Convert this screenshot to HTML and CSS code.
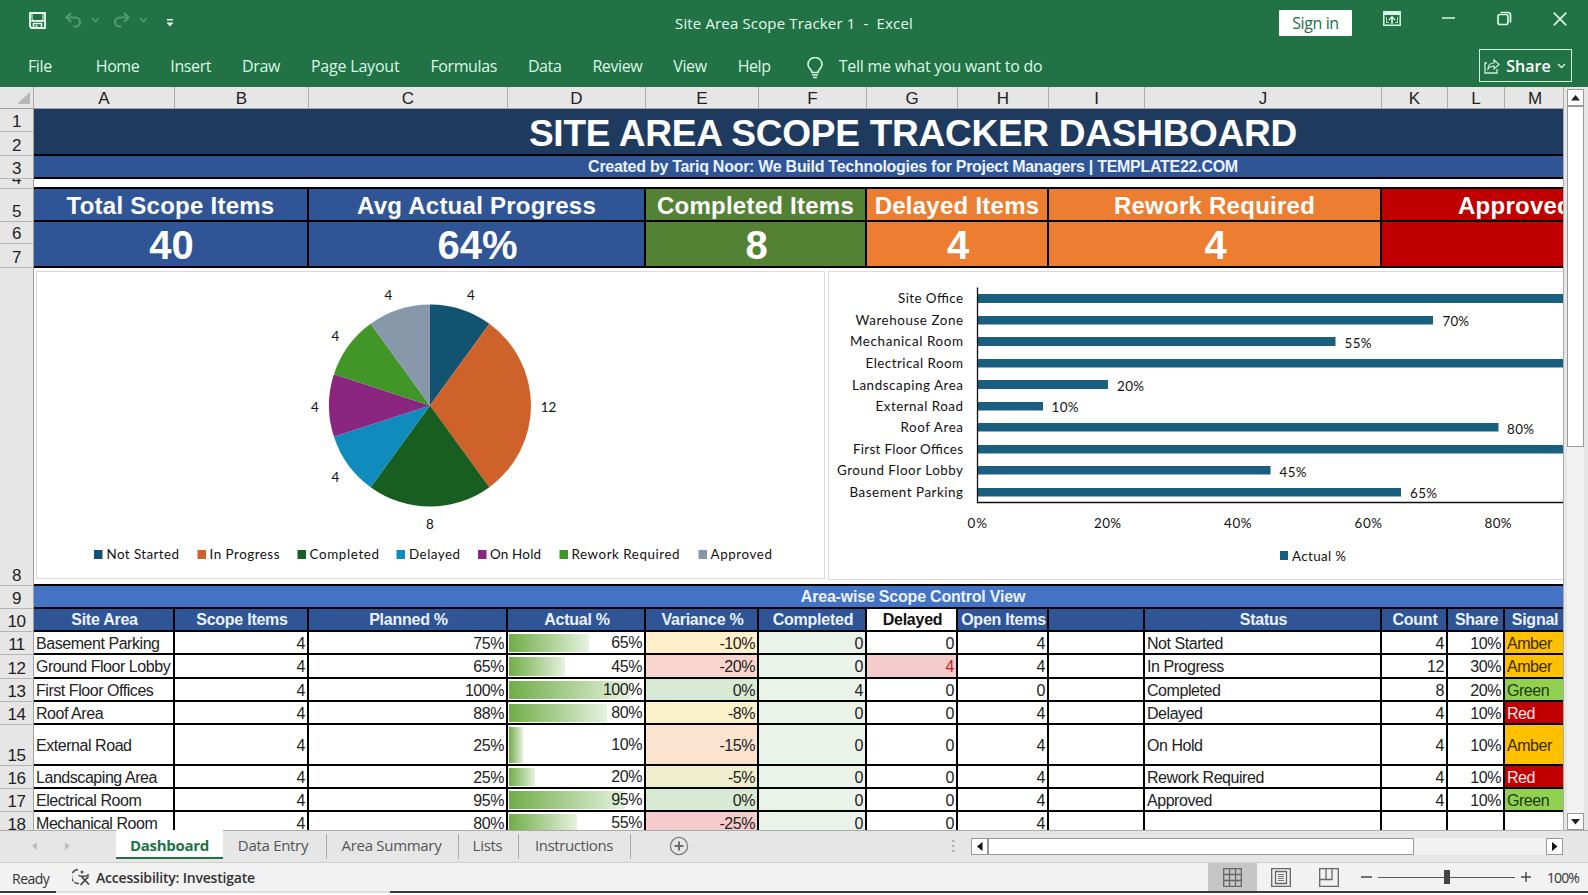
FILE: index.html
```html
<!DOCTYPE html>
<html lang="en">
<head>
  <meta charset="UTF-8">
  <meta name="viewport" content="width=device-width, initial-scale=1.0">
  <title>Site Area Scope Tracker 1 - Excel</title>
  <link rel="stylesheet" href="styles.css">
</head>
<body>

  <!-- Title bar -->
  <header class="titlebar">
    <div class="quick">
      <svg class="q-save" width="17" height="17" viewBox="0 0 17 17"><path d="M1 1h15v15H2.500L1 14.500z" fill="none" stroke="#e9fff2" stroke-width="1.800"/><path d="M3 1v6L4 8.500h9l1-1.500V1" fill="none" stroke="#e9fff2" stroke-width="1"/><path d="M1 8.200h15v1.600H1z" fill="#e9fff2"/><path d="M4.500 16v-4.500h8V16M7.500 13v3" fill="none" stroke="#e9fff2" stroke-width="1.600"/></svg>
      <svg class="q-undo" width="17" height="16" viewBox="0 0 17 16"><path d="M6 1L1.500 5.500 6 10M2 5.500h8.500a4.500 4.500 0 0 1 0 9H8.500" fill="none" stroke="#4f9a70" stroke-width="2.200"/></svg>
      <svg class="q-chev" width="9" height="6" viewBox="0 0 9 6"><path d="M1 1l3.500 3.500L8 1" fill="none" stroke="#4f9a70" stroke-width="1.600"/></svg>
      <svg class="q-redo" width="17" height="16" viewBox="0 0 17 16"><path d="M11 1l4.500 4.500L11 10M15 5.500H6.500a4.500 4.500 0 0 0 0 9H8.500" fill="none" stroke="#4f9a70" stroke-width="2.200"/></svg>
      <svg class="q-chev" width="9" height="6" viewBox="0 0 9 6"><path d="M1 1l3.500 3.500L8 1" fill="none" stroke="#4f9a70" stroke-width="1.600"/></svg>
      <svg class="q-more" width="8" height="8" viewBox="0 0 8 8"><path d="M1 0h6v1.500H1zM.5 3.500h7L4 7.500z" fill="#e9fff2"/></svg>
    </div>
    <div class="doc-name">Site Area Scope Tracker 1&nbsp; -&nbsp; Excel</div>
    <div class="win">
      <button class="signin">Sign in</button>
      <svg class="w-ribbon" width="18" height="15" viewBox="0 0 18 15"><path d="M.8.8h16.400v13.400H.8z" fill="none" stroke="#d5f7e3" stroke-width="1.500"/><path d="M1 1h16v3H1z" fill="#d5f7e3"/><path d="M3 11.500h3M12 11.500h3M3.500 11V6M14.500 11V6" stroke="#a9d8bd" stroke-width="1"/><path d="M9 13V6.500M6 9l3-3 3 3" fill="none" stroke="#d5f7e3" stroke-width="1.600"/></svg>
      <svg class="w-min" width="13" height="2" viewBox="0 0 13 2"><path d="M0 1h13" stroke="#d5f7e3" stroke-width="1.500"/></svg>
      <svg class="w-max" width="15" height="15" viewBox="0 0 15 15"><rect x="1" y="3.500" width="10" height="10" rx="2" fill="none" stroke="#d5f7e3" stroke-width="1.700"/><path d="M3.500 1.500H11a2.500 2.500 0 0 1 2.500 2.500v7.500" fill="none" stroke="#d5f7e3" stroke-width="1.700"/></svg>
      <svg class="w-close" width="14" height="14" viewBox="0 0 14 14"><path d="M.7.7l12.600 12.600M13.300.7L.7 13.300" stroke="#d5f7e3" stroke-width="1.700"/></svg>
    </div>
  </header>

  <!-- Ribbon tabs -->
  <nav class="ribbon">
    <span class="tab-file">File</span>
    <span>Home</span>
    <span>Insert</span>
    <span>Draw</span>
    <span class="t-page">Page Layout</span>
    <span>Formulas</span>
    <span>Data</span>
    <span>Review</span>
    <span>View</span>
    <span>Help</span>
    <svg class="bulb" width="16" height="22" viewBox="0 0 16 22"><path d="M5 15.500C5 12.500 1 11.500 1 7.500a7 7 0 0 1 14 0c0 4-4 5-4 8z" fill="none" stroke="#d5f7e3" stroke-width="1.600"/><path d="M5 18h6M6 20.500h4" stroke="#d5f7e3" stroke-width="1.600"/></svg>
    <span class="tellme">Tell me what you want to do</span>
    <button class="share">
      <svg width="16" height="16" viewBox="0 0 16 16"><path d="M3 5H1v10h12v-4" fill="none" stroke="#c9f0da" stroke-width="1.300"/><path d="M4 11c0-4 2.500-6 6-6V1.800L15 6.500 10 11V8C7.500 8 5.500 8.500 4 11z" fill="none" stroke="#c9f0da" stroke-width="1.200"/></svg>
      <span>Share</span>
      <svg width="9" height="6" viewBox="0 0 9 6"><path d="M1 1l3.500 3.500L8 1" fill="none" stroke="#d5f7e3" stroke-width="1.400"/></svg>
    </button>
  </nav>

  <main class="work">
    <div class="sheet">
      <!-- Column letters -->
      <div class="row col-heads">
        <div class="corner"><svg width="13" height="12" viewBox="0 0 13 12"><path d="M13 0v12H0z" fill="#b8b8b8"/></svg></div>
        <div>A</div><div>B</div><div>C</div><div>D</div><div>E</div><div>F</div><div>G</div><div>H</div><div>I</div><div>J</div><div>K</div><div>L</div><div>M</div><div></div>
      </div>

      <div class="row r-title">
        <div class="heads"><div class="rh h23">1</div><div class="rh h24">2</div></div>
        <div class="cell full title">SITE AREA SCOPE TRACKER DASHBOARD</div>
      </div>
      <div class="row h23">
        <div class="rh">3</div>
        <div class="cell full sub">Created by Tariq Noor: We Build Technologies for Project Managers | TEMPLATE22.COM</div>
      </div>
      <div class="row r-gap">
        <div class="rh">4</div>
        <div class="cell full"></div>
      </div>

      <!-- KPI cards -->
      <div class="row r-kpi">
        <div class="rh">5</div>
        <div class="cell kpi blue s2">Total Scope Items</div>
        <div class="cell kpi blue s2">Avg Actual Progress</div>
        <div class="cell kpi green s2">Completed Items</div>
        <div class="cell kpi orange s2">Delayed Items</div>
        <div class="cell kpi orange s2">Rework Required</div>
        <div class="cell kpi red s4">Approved</div>
      </div>
      <div class="row r-val">
        <div class="heads"><div class="rh h22">6</div><div class="rh h24">7</div></div>
        <div class="cell val blue s2">40</div>
        <div class="cell val blue s2">64%</div>
        <div class="cell val green s2">8</div>
        <div class="cell val orange s2">4</div>
        <div class="cell val orange s2">4</div>
        <div class="cell val red s4"></div>
      </div>

      <!-- Charts -->
      <div class="row r-charts">
        <div class="rh">8</div>
        <div class="cell full charts">
          <svg class="chart" width="790" height="308" viewBox="36 271 790 308">
            <rect x="36.500" y="271.500" width="788" height="307" fill="#fff" stroke="#d9d9d9"/>
            <path d="M430 405.500V304.500A101 101 0 0 1 489.370 323.790Z" fill="#115370"/>
            <path d="M430 405.500L489.370 323.790A101 101 0 0 1 489.370 487.210Z" fill="#cf622b"/>
            <path d="M430 405.500L489.370 487.210A101 101 0 0 1 370.630 487.210Z" fill="#185e20"/>
            <path d="M430 405.500L370.630 487.210A101 101 0 0 1 333.940 436.710Z" fill="#0f8bbd"/>
            <path d="M430 405.500L333.940 436.710A101 101 0 0 1 333.940 374.290Z" fill="#8b2680"/>
            <path d="M430 405.500L333.940 374.290A101 101 0 0 1 370.630 323.790Z" fill="#429527"/>
            <path d="M430 405.500L370.630 323.790A101 101 0 0 1 430 304.500Z" fill="#8798ab"/>
            <g class="mid">
              <text x="471" y="300">4</text>
              <text x="548.500" y="412">12</text>
              <text x="430" y="528.500">8</text>
              <text x="335.500" y="481.500">4</text>
              <text x="315" y="412">4</text>
              <text x="335.500" y="341">4</text>
              <text x="388.500" y="300">4</text>
            </g>
            <g>
              <rect x="94" y="550" width="8.500" height="9" fill="#115370"/><text x="106.500" y="559" textLength="72.500">Not Started</text>
              <rect x="197.500" y="550" width="8.500" height="9" fill="#cf622b"/><text x="209.500" y="559" textLength="70">In Progress</text>
              <rect x="297.500" y="550" width="8.500" height="9" fill="#185e20"/><text x="309.500" y="559" textLength="69.500">Completed</text>
              <rect x="396.500" y="550" width="8.500" height="9" fill="#0f8bbd"/><text x="409" y="559" textLength="51">Delayed</text>
              <rect x="478" y="550" width="8.500" height="9" fill="#8b2680"/><text x="490" y="559" textLength="51">On Hold</text>
              <rect x="559.500" y="550" width="8.500" height="9" fill="#429527"/><text x="571.500" y="559" textLength="108">Rework Required</text>
              <rect x="698.500" y="550" width="8.500" height="9" fill="#8798ab"/><text x="710.500" y="559" textLength="61.500">Approved</text>
            </g>
          </svg>
          <svg class="chart" width="800" height="309" viewBox="828 271 800 309">
            <rect x="828.500" y="271.500" width="900" height="308" fill="#fff" stroke="#d9d9d9"/>
            <g fill="#195f80">
              <rect x="977" y="294" width="651" height="9"/>
              <rect x="977" y="316" width="456" height="8.500"/>
              <rect x="977" y="337" width="358.500" height="9"/>
              <rect x="977" y="359" width="618" height="8.500"/>
              <rect x="977" y="380" width="131" height="9"/>
              <rect x="977" y="402" width="66" height="8.500"/>
              <rect x="977" y="423" width="521.500" height="8.500"/>
              <rect x="977" y="445" width="651" height="8.500"/>
              <rect x="977" y="466" width="293.500" height="8.500"/>
              <rect x="977" y="488" width="424" height="8.500"/>
            </g>
            <path d="M977.500 287.500V502.500H1628" fill="none" stroke="#111" stroke-width="1.300"/>
            <g>
              <text x="898" y="303" textLength="65">Site Office</text>
              <text x="855.500" y="325" textLength="107.500">Warehouse Zone</text>
              <text x="850" y="346" textLength="113">Mechanical Room</text>
              <text x="865.500" y="367.500" textLength="97.500">Electrical Room</text>
              <text x="852" y="389.500" textLength="111">Landscaping Area</text>
              <text x="875.500" y="410.500" textLength="87.500">External Road</text>
              <text x="900.500" y="432" textLength="62.500">Roof Area</text>
              <text x="853" y="453.500" textLength="110">First Floor Offices</text>
              <text x="837" y="475" textLength="126">Ground Floor Lobby</text>
              <text x="849.500" y="496.500" textLength="113.500">Basement Parking</text>
            </g>
            <g>
              <text x="1442.500" y="325.500" textLength="26.500">70%</text>
              <text x="1344.500" y="347.500" textLength="27">55%</text>
              <text x="1117" y="390.500" textLength="27">20%</text>
              <text x="1051.500" y="411.500" textLength="27">10%</text>
              <text x="1507" y="433.500" textLength="27">80%</text>
              <text x="1279.500" y="476.500" textLength="27">45%</text>
              <text x="1410" y="497.500" textLength="27">65%</text>
            </g>
            <g>
              <text x="967.500" y="528" textLength="19.500">0%</text>
              <text x="1094" y="528" textLength="27">20%</text>
              <text x="1224" y="528" textLength="27.500">40%</text>
              <text x="1354.500" y="528" textLength="27.500">60%</text>
              <text x="1484.500" y="528" textLength="27">80%</text>
            </g>
            <rect x="1280" y="551" width="8" height="9" fill="#195f80"/><text x="1292" y="560.500" textLength="54">Actual %</text>
          </svg>
        </div>
      </div>

      <!-- Control table -->
      <div class="row h23">
        <div class="rh">9</div>
        <div class="cell full area">Area-wise Scope Control View</div>
      </div>
      <div class="row h23 thead">
        <div class="rh">10</div>
        <div class="cell">Site Area</div><div class="cell">Scope Items</div><div class="cell">Planned %</div><div class="cell">Actual %</div><div class="cell">Variance %</div><div class="cell">Completed</div><div class="cell plain">Delayed</div><div class="cell">Open Items</div><div class="cell"></div><div class="cell">Status</div><div class="cell">Count</div><div class="cell">Share</div><div class="cell">Signal</div><div class="cell"></div>
      </div>
      <div class="row h23 data">
        <div class="rh">11</div>
        <div class="cell txt">Basement Parking</div><div class="cell">4</div><div class="cell">75%</div><div class="cell bar"><i style="width:80px"></i><b>65%</b></div><div class="cell v10">-10%</div><div class="cell done">0</div><div class="cell">0</div><div class="cell">4</div><div class="cell"></div><div class="cell txt">Not Started</div><div class="cell">4</div><div class="cell">10%</div><div class="cell txt amber">Amber</div><div class="cell"></div>
      </div>
      <div class="row h24 data">
        <div class="rh">12</div>
        <div class="cell txt">Ground Floor Lobby</div><div class="cell">4</div><div class="cell">65%</div><div class="cell bar"><i style="width:56px"></i><b>45%</b></div><div class="cell v20">-20%</div><div class="cell done">0</div><div class="cell late">4</div><div class="cell">4</div><div class="cell"></div><div class="cell txt">In Progress</div><div class="cell">12</div><div class="cell">30%</div><div class="cell txt amber">Amber</div><div class="cell"></div>
      </div>
      <div class="row h23 data">
        <div class="rh">13</div>
        <div class="cell txt">First Floor Offices</div><div class="cell">4</div><div class="cell">100%</div><div class="cell bar"><i style="width:122px"></i><b>100%</b></div><div class="cell v0">0%</div><div class="cell done">4</div><div class="cell">0</div><div class="cell">0</div><div class="cell"></div><div class="cell txt">Completed</div><div class="cell">8</div><div class="cell">20%</div><div class="cell txt ok">Green</div><div class="cell"></div>
      </div>
      <div class="row h23 data">
        <div class="rh">14</div>
        <div class="cell txt">Roof Area</div><div class="cell">4</div><div class="cell">88%</div><div class="cell bar"><i style="width:98px"></i><b>80%</b></div><div class="cell v8">-8%</div><div class="cell done">0</div><div class="cell">0</div><div class="cell">4</div><div class="cell"></div><div class="cell txt">Delayed</div><div class="cell">4</div><div class="cell">10%</div><div class="cell txt stop">Red</div><div class="cell"></div>
      </div>
      <div class="row h41 data">
        <div class="rh">15</div>
        <div class="cell txt">External Road</div><div class="cell">4</div><div class="cell">25%</div><div class="cell bar"><i style="width:14px"></i><b>10%</b></div><div class="cell v15">-15%</div><div class="cell done">0</div><div class="cell">0</div><div class="cell">4</div><div class="cell"></div><div class="cell txt">On Hold</div><div class="cell">4</div><div class="cell">10%</div><div class="cell txt amber">Amber</div><div class="cell"></div>
      </div>
      <div class="row h23 data">
        <div class="rh">16</div>
        <div class="cell txt">Landscaping Area</div><div class="cell">4</div><div class="cell">25%</div><div class="cell bar"><i style="width:26px"></i><b>20%</b></div><div class="cell v5">-5%</div><div class="cell done">0</div><div class="cell">0</div><div class="cell">4</div><div class="cell"></div><div class="cell txt">Rework Required</div><div class="cell">4</div><div class="cell">10%</div><div class="cell txt stop">Red</div><div class="cell"></div>
      </div>
      <div class="row h23 data">
        <div class="rh">17</div>
        <div class="cell txt">Electrical Room</div><div class="cell">4</div><div class="cell">95%</div><div class="cell bar"><i style="width:116px"></i><b>95%</b></div><div class="cell v0">0%</div><div class="cell done">0</div><div class="cell">0</div><div class="cell">4</div><div class="cell"></div><div class="cell txt">Approved</div><div class="cell">4</div><div class="cell">10%</div><div class="cell txt ok">Green</div><div class="cell"></div>
      </div>
      <div class="row h23 data">
        <div class="rh">18</div>
        <div class="cell txt">Mechanical Room</div><div class="cell">4</div><div class="cell">80%</div><div class="cell bar"><i style="width:68px"></i><b>55%</b></div><div class="cell v25">-25%</div><div class="cell done">0</div><div class="cell">0</div><div class="cell">4</div><div class="cell"></div><div class="cell txt"></div><div class="cell"></div><div class="cell"></div><div class="cell txt"></div><div class="cell"></div>
      </div>
    </div>

    <div class="vscroll">
      <div class="sbtn"><svg width="9" height="6" viewBox="0 0 9 6"><path d="M4.500 0L9 5.500H0z" fill="#222"/></svg></div>
      <div class="vthumb"></div>
      <div class="vtrack"></div>
      <div class="sbtn"><svg width="9" height="6" viewBox="0 0 9 6"><path d="M4.500 5.500L9 0H0z" fill="#222"/></svg></div>
    </div>
  </main>

  <!-- Sheet tabs -->
  <div class="tabs">
    <div class="tab-nav">
      <svg width="5" height="8" viewBox="0 0 5 8"><path d="M5 0v8L0 4z" fill="#bdbdbd"/></svg>
      <svg width="5" height="8" viewBox="0 0 5 8"><path d="M0 0v8l5-4z" fill="#bdbdbd"/></svg>
    </div>
    <div class="tab active">Dashboard</div>
    <div class="tab w-entry">Data Entry</div>
    <div class="tab w-summary">Area Summary</div>
    <div class="tab w-lists">Lists</div>
    <div class="tab w-instr">Instructions</div>
    <svg class="plus" width="20" height="20" viewBox="0 0 20 20"><circle cx="10" cy="10" r="8.600" fill="none" stroke="#7b7b7b" stroke-width="1.300"/><path d="M10 5.500v9M5.500 10h9" stroke="#6b6b6b" stroke-width="2"/></svg>
    <svg class="grip" width="3" height="14" viewBox="0 0 3 14"><path d="M0 1h2.500v2H0zM0 6h2.500v2H0zM0 11h2.500v2H0z" fill="#b0b0b0"/></svg>
    <div class="hscroll">
      <div class="sbtn"><svg width="6" height="9" viewBox="0 0 6 9"><path d="M0 4.500L5.500 0v9z" fill="#111"/></svg></div>
      <div class="hthumb"></div>
      <div class="htrack"></div>
      <div class="sbtn"><svg width="6" height="9" viewBox="0 0 6 9"><path d="M5.500 4.500L0 0v9z" fill="#111"/></svg></div>
    </div>
  </div>

  <!-- Status bar -->
  <footer class="status">
    <span class="ready">Ready</span>
    <svg class="access" width="19" height="18" viewBox="0 0 19 18"><path d="M6 1.500A7 7 0 0 0 7 15.500" fill="none" stroke="#555" stroke-width="1.500" stroke-dasharray="7 1.500"/><path d="M10 2.500v3M8.500 4h3" stroke="#555" stroke-width="1.600"/><path d="M6.500 7.500l3 .8h4l3.500-1.800" fill="none" stroke="#555" stroke-width="1.500"/><path d="M9.500 8.500l7.500 8M16.500 8.500L8.500 17" stroke="#444" stroke-width="1.800"/></svg>
    <span class="acc-text">Accessibility: Investigate</span>
    <div class="views">
      <div class="view on"><svg width="19" height="19" viewBox="0 0 19 19"><path d="M.7.7h17.600v17.600H.7zM6.500.7v17.600M12.500.7v17.600M.7 6.500h17.600M.7 12.500h17.600" fill="none" stroke="#666" stroke-width="1.300"/></svg></div>
      <div class="view"><svg width="20" height="19" viewBox="0 0 20 19"><path d="M.7.7h18.600v17.600H.7zM4.500 3.500h11v12h-11z" fill="none" stroke="#666" stroke-width="1.300"/><path d="M7 6.500h6M7 8.500h6M7 10.500h6M7 12.500h6" stroke="#777" stroke-width="1"/></svg></div>
      <div class="view"><svg width="20" height="19" viewBox="0 0 20 19"><path d="M.7.7h18.600v17.600H.7zM.7 11.500h12.300V.7M7 .7v10.800" fill="none" stroke="#666" stroke-width="1.300"/></svg></div>
    </div>
    <div class="zoom">
      <svg width="170" height="20" viewBox="0 0 170 20"><path d="M0 10h11" stroke="#444" stroke-width="1.500"/><path d="M17 10.500h137" stroke="#555" stroke-width="1.200"/><rect x="83" y="3" width="6" height="14" fill="#444"/><path d="M160 10h10M165 5v10" stroke="#444" stroke-width="1.400"/></svg>
      <span>100%</span>
    </div>
  </footer>
  <div class="edge"><i></i><i></i><i></i></div>

</body>
</html>
```
FILE: styles.css
```css
* {
  box-sizing: border-box;
}

body {
  margin: 0;
  width: 1588px;
  height: 895px;
  overflow: hidden;
  background: #fff;
  font-family: "Open Sans", sans-serif;
  color: #222;
}

svg {
  display: block;
  flex: none;
}

/* Title bar */
.titlebar {
  height: 46px;
  background: #217346;
  display: grid;
  grid-template-columns: 675px 1fr auto;
}

.quick {
  display: flex;
  align-items: flex-start;
  padding: 12px 0 0 29px;
}

.q-undo {
  margin: 0 9px 0 19px;
}

.q-redo {
  margin: 0 9px 0 13px;
}

.q-chev {
  margin-top: 5px;
}

.q-more {
  margin: 7px 0 0 18px;
}

.doc-name {
  color: #e4faed;
  font-size: 15px;
  line-height: 46px;
  letter-spacing: 0.15px;
  white-space: nowrap;
}

.win {
  display: flex;
  align-items: flex-start;
  padding-right: 21px;
}

.signin {
  width: 73px;
  height: 26px;
  margin-top: 10px;
  padding: 0;
  border: none;
  border-radius: 1px;
  background: #fff;
  color: #217346;
  font-family: inherit;
  font-size: 16px;
  line-height: 26px;
  letter-spacing: -0.4px;
}

.w-ribbon {
  margin: 11px 0 0 31px;
}

.w-min {
  margin: 17px 0 0 41px;
}

.w-max {
  margin: 11px 0 0 42px;
}

.w-close {
  margin: 12px 0 0 41px;
}

/* Ribbon */
.ribbon {
  height: 41px;
  background: #217346;
  color: #dcf7e7;
  display: flex;
  align-items: center;
  font-size: 16px;
  letter-spacing: -0.4px;
  padding: 0 16px 2px 28px;
  gap: 31px;
  white-space: nowrap;
}

.tab-file {
  margin-right: 13px;
}

.t-page {
  letter-spacing: -0.2px;
}

.bulb {
  margin: 4px 0 0 5px;
}

.tellme {
  margin-left: -15px;
  letter-spacing: -0.25px;
}

.share {
  margin-left: auto;
  width: 93px;
  height: 33px;
  padding: 0 5px 0 4px;
  border: 1px solid #c9f0da;
  background: none;
  color: #fff;
  font-family: inherit;
  font-size: 16px;
  font-weight: 600;
  display: flex;
  align-items: center;
  justify-content: space-between;
}

/* Worksheet */
.work {
  height: 743px;
  display: flex;
  background: #e6e6e6;
}

.sheet {
  width: 1564px;
  overflow: hidden;
  border-right: 1px solid #ababab;
  font-family: "Liberation Sans", Arial, sans-serif;
  font-size: 16px;
}

.row {
  display: grid;
  grid-template-columns: 34px 141px 134px 199px 138px 113px 108px 91px 91px 96px 237px 66px 57px 60px 227px;
  width: 1792px;
}

.h22 { height: 22px; }
.h23 { height: 23px; }
.h24 { height: 24px; }
.h41 { height: 41px; }

.col-heads {
  height: 22px;
  background: #e6e6e6;
  border-bottom: 1px solid #9f9f9f;
  font-size: 17px;
  line-height: 23px;
  text-align: center;
}

.col-heads div {
  border-right: 1px solid #ababab;
}

.col-heads div:nth-last-child(2) {
  border-right: none;
}

.corner {
  display: flex;
  justify-content: flex-end;
  padding: 5px 3px 0 0;
}

.rh {
  background: #e6e6e6;
  border-right: 1px solid #9f9f9f;
  border-bottom: 1px solid #b4b4b4;
  display: flex;
  align-items: flex-end;
  justify-content: center;
  font-size: 17px;
  line-height: 19px;
  letter-spacing: -0.5px;
  overflow: hidden;
}

.cell {
  background: #fff;
  border-right: 2px solid #000;
  border-bottom: 2px solid #000;
  display: flex;
  align-items: center;
  justify-content: center;
  white-space: nowrap;
  overflow: hidden;
  min-width: 0;
}

.full { grid-column: 2 / -1; }
.s2 { grid-column: span 2; }
.s4 { grid-column: span 4; }

.r-title { height: 47px; }
.r-gap { height: 10px; }
.r-kpi { height: 33px; }
.r-val { height: 46px; }
.r-charts { height: 318px; }

.title {
  background: #1f3a5f;
  color: #fff;
  font-size: 37px;
  font-weight: bold;
  letter-spacing: -0.25px;
  padding: 4px 0 0 2px;
}

.sub {
  background: #2f5597;
  color: #eaf3ff;
  font-weight: bold;
  letter-spacing: -0.28px;
  padding: 1px 0 0 2px;
}

.kpi {
  color: #fff;
  font-size: 24px;
  font-weight: bold;
  letter-spacing: 0.25px;
  padding-top: 2px;
}

.val {
  color: #fff;
  font-size: 40px;
  font-weight: bold;
  padding: 3px 0 0 2px;
}

.blue { background: #2f5597; }
.green { background: #548235; }
.orange { background: #ed7d31; }
.red { background: #c00000; }

.kpi.red {
  justify-content: flex-start;
  padding-left: 76px;
}

.charts {
  align-items: flex-start;
  justify-content: flex-start;
  gap: 2px;
  padding: 3px 0 0 2px;
}

.chart text {
  font-family: Lato, sans-serif;
  font-size: 13.4px;
  fill: #111;
}

.chart .mid {
  text-anchor: middle;
}

.area {
  background: #4472c4;
  color: #eaf3ff;
  font-weight: bold;
  letter-spacing: -0.2px;
  padding: 1px 0 0 2px;
}

.thead .cell {
  background: #2f5597;
  color: #eaf3ff;
  font-weight: bold;
  letter-spacing: -0.25px;
  padding: 1px 0 0 2px;
}

.thead .plain {
  background: #fff;
  color: #111;
}

.data .cell {
  justify-content: flex-end;
  padding: 2px 2px 0 0;
  letter-spacing: -0.45px;
}

.data .txt {
  justify-content: flex-start;
  padding-left: 2px;
}

.data .bar {
  padding: 1px 2px 1px 0;
  justify-content: space-between;
  align-items: stretch;
}

/* the number is printed over the gradient bar */
.bar i {
  flex: none;
  margin: 1px 0 0 1px;
  background: linear-gradient(90deg, #70ad47, #e6f2df);
}

.bar b {
  width: 60px;
  margin-left: -60px;
  padding-top: 1px;
  font-weight: normal;
  display: flex;
  align-items: center;
  justify-content: flex-end;
}

.data .v0 { background: #d9ead3; }
.data .v5 { background: #efefcd; }
.data .v8 { background: #fbf2cc; }
.data .v10 { background: #fff0cb; }
.data .v15 { background: #fce3cf; }
.data .v20 { background: #f8d5cd; }
.data .v25 { background: #f4cccc; }
.data .done { background: #eaf3e9; }
.data .late { background: #f4cccc; color: #c81e1e; }
.data .amber { background: #ffc000; color: #3d2c00; }
.data .ok { background: #92d050; color: #1c3a0a; }
.data .stop { background: #c00000; color: #ffe9e9; }

/* Scrollbars */
.sbtn {
  width: 17px;
  height: 17px;
  flex: none;
  background: #fff;
  border: 1px solid #999;
  display: flex;
  align-items: center;
  justify-content: center;
}

.vscroll {
  width: 17px;
  margin: 2px 0 0 3px;
  display: flex;
  flex-direction: column;
}

.vthumb {
  height: 341px;
  background: #fff;
  border: 1px solid #999;
}

.vtrack {
  flex: 1;
  background: #f1f1f1;
}

/* Sheet tabs */
.tabs {
  height: 33px;
  background: #e6e6e6;
  border-bottom: 1px solid #cfcfcf;
  box-shadow: inset 0 1px #ababab;
  display: flex;
  align-items: flex-start;
  font-size: 15px;
  letter-spacing: -0.3px;
  color: #555;
}

.tab-nav {
  width: 116px;
  display: flex;
  gap: 28px;
  padding: 12px 0 0 32px;
}

.tab {
  height: 25px;
  margin-top: 4px;
  line-height: 23px;
  text-align: center;
  border-right: 1px solid #ababab;
  white-space: nowrap;
}

.tab.active {
  width: 107px;
  height: 29px;
  margin-top: 0;
  line-height: 31px;
  background: #fff;
  border-right: none;
  border-bottom: 2px solid #217346;
  color: #217346;
  font-weight: bold;
}

.w-entry { width: 104px; padding-right: 3px; }
.w-summary { width: 132px; padding-right: 2px; }
.w-lists { width: 60px; padding-right: 2px; }
.w-instr { width: 112px; padding-right: 1px; letter-spacing: -0.4px; }

.plus {
  margin: 6px 0 0 38px;
}

.grip {
  margin: 9px 0 0 263px;
}

.hscroll {
  width: 592px;
  margin: 8px 0 0 16px;
  display: flex;
}

.hthumb {
  width: 426px;
  background: #fff;
  border: 1px solid #999;
}

.htrack {
  flex: 1;
  background: #f1f1f1;
}

/* Status bar */
.status {
  height: 28px;
  background: #f2f2f2;
  display: flex;
  align-items: center;
  font-size: 14px;
  color: #333;
  white-space: nowrap;
}

.ready {
  width: 60px;
  margin-left: 12px;
  padding-top: 2px;
  letter-spacing: -0.5px;
}

.acc-text {
  margin-left: 5px;
  font-weight: 600;
  letter-spacing: -0.2px;
}

.views {
  margin-left: auto;
  display: flex;
}

.view {
  width: 48px;
  height: 28px;
  display: flex;
  align-items: center;
  justify-content: center;
}

.view.on {
  width: 49px;
  background: #c6c6c6;
}

.zoom {
  display: flex;
  align-items: center;
  gap: 16px;
  width: 235px;
  padding-left: 8px;
  letter-spacing: -0.9px;
}

.edge {
  height: 2px;
  display: grid;
  grid-template-columns: 56px 334px 1fr;
  background: #3c3c3c;
}

.edge i:nth-child(2) {
  background: #dedede;
}
```
